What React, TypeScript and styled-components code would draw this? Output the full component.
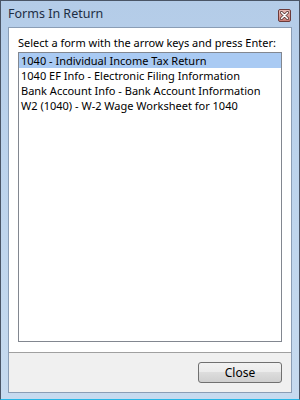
import React from "react";
import styled, { createGlobalStyle } from "styled-components";

const GlobalStyle = createGlobalStyle`
  html, body {
    margin: 0;
    padding: 0;
    width: 300px;
    height: 400px;
    overflow: hidden;
  }
  * {
    box-sizing: border-box;
  }
`;

const Window = styled.div`
  width: 300px;
  height: 400px;
  display: flex;
  flex-direction: column;
  padding: 0 7px 6px 7px;
  border: 1px solid #4a5566;
  border-bottom: 1px solid #27b6e6;
  background: linear-gradient(180deg, #b4cce8 0%, #bcd3ec 40%, #c6daef 100%);
  font-family: "Noto Sans", "Open Sans", sans-serif;
  font-size: 11px;
  color: #000;
`;

const TitleBar = styled.div`
  height: 26px;
  display: flex;
  align-items: center;
  justify-content: space-between;
  padding: 0 1px 1px 0;
`;

const Title = styled.div`
  color: #1e2e44;
  font-size: 12.5px;
  line-height: 15px;
`;

const CloseBox = styled.div`
  width: 13px;
  height: 13px;
  margin-top: 3px;
  display: flex;
  align-items: center;
  justify-content: center;
  border: 1px solid #6b3a3a;
  border-radius: 2px;
  background: linear-gradient(180deg, #e8b9b4 0%, #d99a93 50%, #c97e77 100%);
`;

const Client = styled.div`
  flex: 1;
  display: flex;
  flex-direction: column;
  border: 1px solid #8a9db5;
  background: #ffffff;
`;

const Body = styled.div`
  flex: 1;
  display: flex;
  flex-direction: column;
  padding: 7px 9px 10px 9px;
`;

const Prompt = styled.div`
  line-height: 15px;
  margin-bottom: 2px;
  white-space: nowrap;
`;

const ListBox = styled.div`
  flex: 1;
  border: 1px solid #828790;
  background: #fff;
  display: flex;
  flex-direction: column;
`;

const Item = styled.div<{ $selected?: boolean }>`
  height: 15px;
  line-height: 15px;
  padding-left: 2px;
  white-space: nowrap;
  background: ${(p) => (p.$selected ? "#a9caf3" : "transparent")};
`;

const Footer = styled.div`
  height: 40px;
  display: flex;
  justify-content: flex-end;
  align-items: flex-start;
  padding: 9px 9px 0 0;
  border-top: 1px solid #a0a0a0;
  background: #f0f0f0;
`;

const Button = styled.button`
  width: 84px;
  height: 21px;
  border: 1px solid #707070;
  border-radius: 3px;
  background: linear-gradient(180deg, #f2f2f2 0%, #ebebeb 49%, #dddddd 50%, #cfcfcf 100%);
  font-family: "Noto Sans", "Open Sans", sans-serif;
  font-size: 12px;
  color: #000;
  padding: 0;
  line-height: 17px;
`;

const forms = [
  "1040 - Individual Income Tax Return",
  "1040 EF Info - Electronic Filing Information",
  "Bank Account Info - Bank Account Information",
  "W2 (1040) - W-2 Wage Worksheet for 1040",
];

const App = () => {
  return (
    <>
      <GlobalStyle />
      <Window>
        <TitleBar>
          <Title>Forms In Return</Title>
          <CloseBox>
            <svg width="9" height="9" viewBox="0 0 9 9">
              <path d="M1.5 1.5 L7.5 7.5 M7.5 1.5 L1.5 7.5" stroke="#4a2a2a" strokeWidth="3" strokeLinecap="round" />
              <path d="M1.5 1.5 L7.5 7.5 M7.5 1.5 L1.5 7.5" stroke="#ffffff" strokeWidth="1.6" strokeLinecap="round" />
            </svg>
          </CloseBox>
        </TitleBar>
        <Client>
          <Body>
            <Prompt>Select a form with the arrow keys and press Enter:</Prompt>
            <ListBox>
              {forms.map((f, i) => (
                <Item key={f} $selected={i === 0}>
                  {f}
                </Item>
              ))}
            </ListBox>
          </Body>
          <Footer>
            <Button>Close</Button>
          </Footer>
        </Client>
      </Window>
    </>
  );
};

export default App;
